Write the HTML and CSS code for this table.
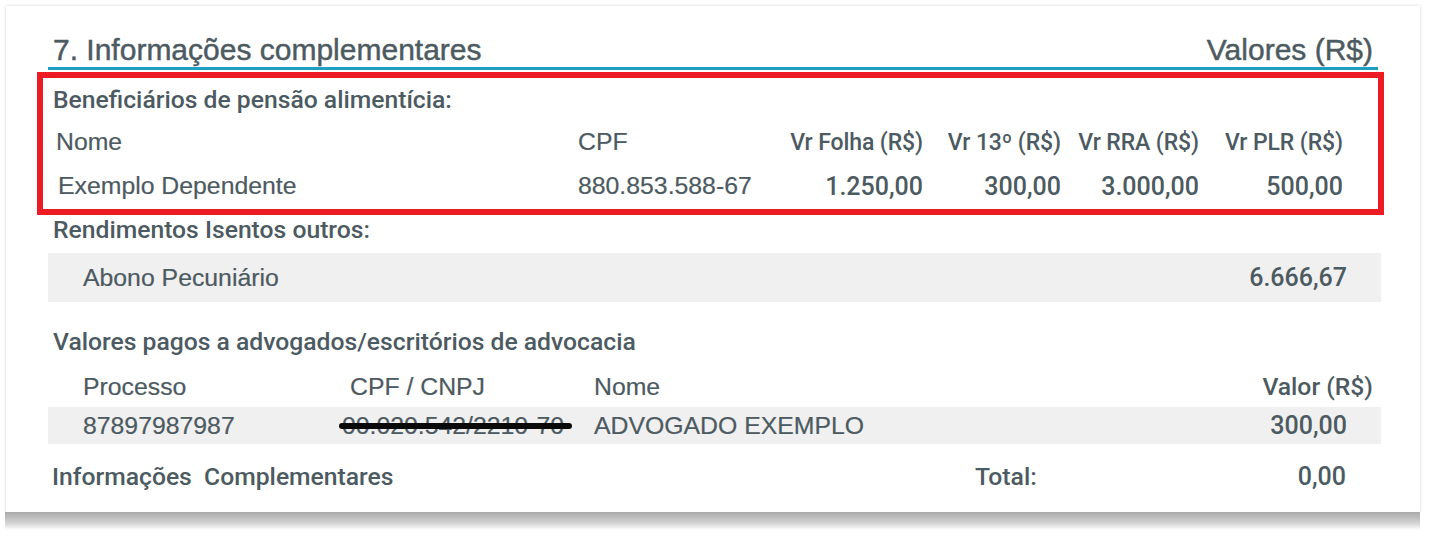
FILE: index.html
```html
<!DOCTYPE html>
<html lang="pt-BR">
<head>
<meta charset="utf-8">
<title>Informações complementares</title>
<link rel="stylesheet" href="styles.css">
</head>
<body>
<div class="card">
  <div class="title-row">
    <h1 class="title">7. Informações complementares</h1>
    <span class="title-right">Valores (R$)</span>
  </div>

  <section class="highlight">
    <div class="label-row med">Beneficiários de pensão alimentícia:</div>
    <div class="pension-grid head-row">
      <span class="reg">Nome</span>
      <span class="reg">CPF</span>
      <span class="num med cond">Vr Folha (R$)</span>
      <span class="num med cond">Vr 13º (R$)</span>
      <span class="num med cond">Vr RRA (R$)</span>
      <span class="num med cond">Vr PLR (R$)</span>
    </div>
    <div class="pension-grid value-row">
      <span class="reg name-cell">Exemplo Dependente</span>
      <span class="reg">880.853.588-67</span>
      <span class="num val">1.250,00</span>
      <span class="num val">300,00</span>
      <span class="num val">3.000,00</span>
      <span class="num val">500,00</span>
    </div>
  </section>

  <div class="section-label med">Rendimentos Isentos outros:</div>
  <div class="shaded-row tall">
    <span class="reg">Abono Pecuniário</span>
    <span class="val">6.666,67</span>
  </div>

  <div class="section-label lawyers-label med">Valores pagos a advogados/escritórios de advocacia</div>
  <div class="lawyer-grid lawyer-head">
    <span class="reg">Processo</span>
    <span class="reg">CPF / CNPJ</span>
    <span class="reg">Nome</span>
    <span class="num med">Valor (R$)</span>
  </div>
  <div class="lawyer-grid shaded lawyer-row">
    <span class="reg">87897987987</span>
    <span class="reg"><span class="redacted">00.020.542/2210-70</span></span>
    <span class="reg">ADVOGADO EXEMPLO</span>
    <span class="num val">300,00</span>
  </div>

  <div class="footer-row">
    <span class="med">Informações&nbsp; Complementares</span>
    <span class="med">Total:</span>
    <span class="num val">0,00</span>
  </div>
</div>
</body>
</html>
```

FILE: styles.css
```css
html, body {
  margin: 0;
  padding: 0;
  background: #ffffff;
}

body {
  padding: 6px 14px 30px 6px;
  font-family: "Liberation Sans", Arial, sans-serif;
  color: #4c5a61;
}

.card {
  position: relative;
  width: 1414px;
  height: 506px;
  box-sizing: border-box;
  padding: 0 36px 0 31px;
  background: #ffffff;
  box-shadow: 0 0 3px rgba(0, 0, 0, 0.18);
}

.card::after {
  content: "";
  position: absolute;
  top: 100%;
  left: -1px;
  right: 0;
  height: 18px;
  background: linear-gradient(to bottom, #a9a9a9 0%, #bdbdbd 30%, #d6d6d6 65%, rgba(255, 255, 255, 0) 100%);
}

.reg {
  font-family: "Liberation Sans", Arial, sans-serif;
  font-weight: 400;
  font-size: 24.8px;
  -webkit-text-stroke: 0.2px currentColor;
}

.med {
  font-family: Roboto, "Liberation Sans", sans-serif;
  font-weight: 500;
  font-size: 24.7px;
}

.val {
  font-family: Roboto, "Liberation Sans", sans-serif;
  font-weight: 500;
  font-size: 25px;
}

.cond {
  font-size: 23px;
  letter-spacing: -0.1px;
}

.num {
  text-align: right;
}

/* Title */
.title-row {
  display: flex;
  justify-content: space-between;
  align-items: flex-end;
  margin: 0 6px 0 11px;
  padding: 27px 5px 0 5px;
  border-bottom: 3px solid #1f9dc3;
  line-height: 34px;
  height: 34px;
}

.title {
  margin: 0;
  font-family: "Liberation Sans", Arial, sans-serif;
  font-weight: 400;
  font-size: 30px;
  color: #4c5a61;
  -webkit-text-stroke: 0.45px currentColor;
}

.title-right {
  font-family: "Liberation Sans", Arial, sans-serif;
  font-size: 30px;
  -webkit-text-stroke: 0.45px currentColor;
}

/* Highlight box */
.highlight {
  margin-top: 2px;
  border: 6px solid #ed1c24;
  padding: 0 0 0 10px;
  height: 131px;
}

.label-row {
  height: 43px;
  line-height: 43px;
}

.pension-grid {
  display: grid;
  grid-template-columns: 522px 200px 145px 138px 138px 144px;
  align-items: center;
  padding-left: 3px;
}

.head-row {
  height: 42px;
}

.value-row {
  height: 46px;
}

.name-cell {
  padding-left: 2px;
}

/* Sections */
.section-label {
  margin: 0 3px 0 11px;
  padding-left: 5px;
  height: 30px;
  line-height: 30px;
}

.shaded-row {
  display: flex;
  justify-content: space-between;
  align-items: center;
  margin: 8px 3px 0 11px;
  padding: 0 34px 0 35px;
  background: #f0f0f0;
}

.tall {
  height: 49px;
}

.lawyers-label {
  margin-top: 20px;
  height: 40px;
  line-height: 40px;
}

.lawyer-grid {
  display: grid;
  grid-template-columns: 267px 244px 1fr 140px;
  align-items: center;
  margin: 0 3px 0 11px;
  padding-left: 35px;
}

.lawyer-head {
  height: 41px;
  padding-top: 4px;
  padding-right: 8px;
}

.shaded {
  background: #f0f0f0;
}

.lawyer-row {
  height: 37px;
  padding-right: 34px;
}

.redacted {
  position: relative;
  margin-left: -8px;
}

.redacted::after {
  content: "";
  position: absolute;
  left: -3px;
  right: -8px;
  top: 55%;
  height: 6px;
  margin-top: -3px;
  background: #0a0a0a;
  border-radius: 3px;
}

.footer-row {
  display: grid;
  grid-template-columns: 923px 1fr 120px;
  align-items: center;
  margin: 12px 3px 0 11px;
  padding: 0 35px 0 4px;
  height: 40px;
}
```
